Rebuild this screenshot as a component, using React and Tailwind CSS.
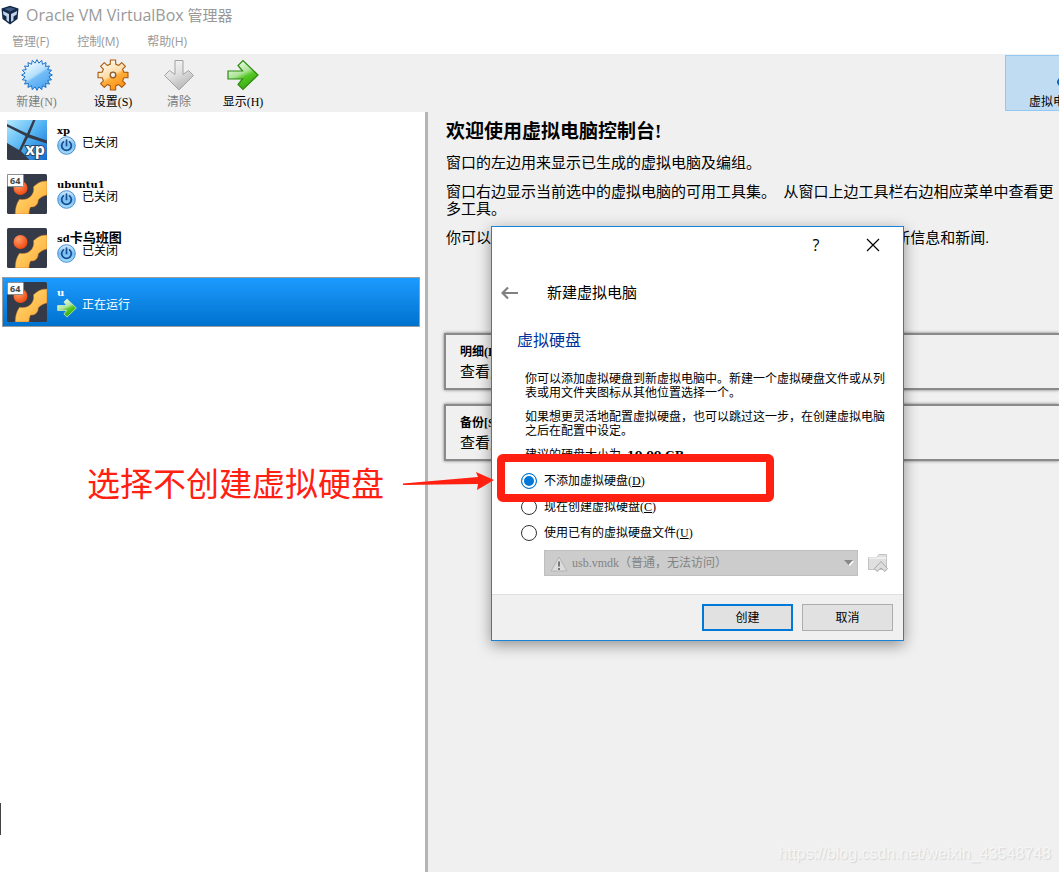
const cjk = "font-['Liberation_Serif','Noto_Sans_CJK_SC',sans-serif]";

function BoxLogo() {
  return (
    <svg className="h-5 w-5" viewBox="0 0 20 20" aria-hidden="true">
      <path d="M1.500 3.500 10 .8l8.500 2.700-1 10.500L10 19.500 2.500 14z" fill="#14294a" />
      <path d="M4.500 3.900 10 2.200l5.500 1.700L10 6.500z" fill="#3d5a82" />
      <path d="M3 6 9 9v8L6.500 15.300V11.500L3.300 9.500zM17 6l-6 3v8l2.500-1.700V11.500l3.200-2z" fill="#c3d3e6" />
    </svg>
  );
}

function NewIcon() {
  const points = Array.from({ length: 40 }, (_, i) => {
    const r = i % 2 ? 12 : 15.4;
    const a = (i * Math.PI) / 20 - Math.PI / 2;
    return `${(16 + r * Math.cos(a)).toFixed(2)},${(16 + r * Math.sin(a)).toFixed(2)}`;
  }).join(" ");
  return (
    <svg className="h-8 w-8" viewBox="0 0 32 32" aria-hidden="true">
      <defs>
        <linearGradient id="newFill" x1="0.15" y1="0" x2="0.8" y2="1">
          <stop offset="0.1" stopColor="#f2fbff" />
          <stop offset="0.48" stopColor="#b2defc" />
          <stop offset="0.55" stopColor="#74bdf6" />
          <stop offset="1" stopColor="#47a0ef" />
        </linearGradient>
      </defs>
      <polygon points={points} fill="url(#newFill)" stroke="#1c74cc" strokeWidth="1" />
    </svg>
  );
}

function GearIcon() {
  const teeth = [0, 45, 90, 135, 180, 225, 270, 315];
  const outline = teeth
    .flatMap((t) =>
      [
        [-14, 11.2],
        [-10, 15.2],
        [10, 15.2],
        [14, 11.2],
      ].map(([d, r]) => {
        const a = ((t + d) * Math.PI) / 180;
        return `${(16 + r * Math.sin(a)).toFixed(2)},${(16 - r * Math.cos(a)).toFixed(2)}`;
      }),
    )
    .join(" ");
  return (
    <svg className="h-8 w-8" viewBox="0 0 32 32" aria-hidden="true">
      <defs>
        <linearGradient id="gearFill" x1="0.2" y1="0" x2="0.75" y2="1">
          <stop offset="0.1" stopColor="#fff6e6" />
          <stop offset="0.48" stopColor="#ffdca8" />
          <stop offset="0.58" stopColor="#ffad3b" />
          <stop offset="1" stopColor="#ff8c0a" />
        </linearGradient>
      </defs>
      <polygon points={outline} fill="url(#gearFill)" stroke="#a85c10" strokeWidth="1.1" strokeLinejoin="round" />
      <circle cx="16" cy="16" r="2.800" fill="#efefef" stroke="#8c5a22" strokeWidth="1.300" />
    </svg>
  );
}

function DiscardIcon() {
  return (
    <svg className="h-8 w-8" viewBox="0 0 32 32" aria-hidden="true">
      <defs>
        <linearGradient id="discardFill" x1="0" y1="0" x2="0.5" y2="1">
          <stop offset="0" stopColor="#fbfbfb" />
          <stop offset="0.5" stopColor="#e2e2e2" />
          <stop offset="1" stopColor="#b9b9b9" />
        </linearGradient>
      </defs>
      <path d="M12 1.500h8v14l5.500-4 5 5L16 31 1.500 16.500l5-5 5.500 4z" fill="url(#discardFill)" stroke="#a2a2a2" />
    </svg>
  );
}

function ShowIcon({ small = false }) {
  return (
    <svg className={small ? "h-5 w-5" : "h-8 w-8"} viewBox="0 0 32 32" aria-hidden="true">
      <defs>
        <linearGradient id={small ? "showSmall" : "showFill"} x1="0.2" y1="0" x2="0.7" y2="1">
          <stop offset="0" stopColor="#f4ffef" />
          <stop offset="0.45" stopColor="#aee49a" />
          <stop offset="0.6" stopColor="#55c824" />
          <stop offset="1" stopColor="#32a40c" />
        </linearGradient>
      </defs>
      <path
        d="M1 12h14.500l-4.500-5.500 5-5L31 16 16 30.500l-5-5 4.500-5.500H1z"
        fill={small ? "url(#showSmall)" : "url(#showFill)"}
        stroke={small ? "#d4efc8" : "#2d8a12"}
        strokeWidth="1.200"
      />
    </svg>
  );
}

function PowerIcon() {
  return (
    <svg className="h-5 w-5" viewBox="0 0 20 20" aria-hidden="true">
      <defs>
        <linearGradient id="powerFill" x1="0" y1="0" x2="0" y2="1">
          <stop offset="0" stopColor="#d3ebfd" />
          <stop offset="0.5" stopColor="#78bdf3" />
          <stop offset="1" stopColor="#a8e0fb" />
        </linearGradient>
      </defs>
      <circle cx="9.500" cy="9.500" r="8.800" fill="url(#powerFill)" stroke="#4a8fd0" />
      <path d="M6.500 5.800a4.800 4.800 0 1 0 6 0M9.500 4v5.500" fill="none" stroke="#174f91" strokeWidth="1.700" strokeLinecap="round" />
    </svg>
  );
}

function XpIcon() {
  return (
    <svg className="h-10 w-10 shrink-0" viewBox="0 0 40 40" aria-hidden="true">
      <defs>
        <linearGradient id="xpFill" x1="0" y1="0" x2="1" y2="1">
          <stop offset="0" stopColor="#b5eaff" />
          <stop offset="0.5" stopColor="#51b2f3" />
          <stop offset="1" stopColor="#1268cf" />
        </linearGradient>
      </defs>
      <rect width="40" height="40" rx="1.500" fill="#343a47" />
      <path d="M0 0h26l-6 13.500L0 4zM28.500 0H40v20.500l-17.500-6zM0 6.500l18.500 9.500L12 30 0 23zM21 17.500 40 23.500V40H22.500L14 31z" fill="url(#xpFill)" />
      <text x="18.500" y="35" fontFamily="Open Sans, sans-serif" fontSize="16" fontWeight="700" fill="#fff" stroke="#26466e" strokeWidth="2" paintOrder="stroke">xp</text>
    </svg>
  );
}

function UbuntuIcon({ badge }) {
  return (
    <svg className="h-10 w-10 shrink-0" viewBox="0 0 40 40" aria-hidden="true">
      <defs>
        <linearGradient id="ubuArc" x1="0" y1="0" x2="1" y2="1">
          <stop offset="0" stopColor="#ffe27e" />
          <stop offset="1" stopColor="#ffa62f" />
        </linearGradient>
        <radialGradient id="ubuDot" cx="0.35" cy="0.3" r="0.8">
          <stop offset="0" stopColor="#ff9e68" />
          <stop offset="1" stopColor="#ee4107" />
        </radialGradient>
      </defs>
      <rect width="40" height="40" rx="1.500" fill="#343a47" />
      <circle cx="13.500" cy="14" r="7" fill="url(#ubuDot)" />
      <path
        d="M40 7c-4 0-6.500.8-9 2.200-1 .8-3 1.800-4.500 3.600.6 4-.3 6.700-2.500 9.200-3 3.200-6.500 4-11.500 3.300C9.500 29.500 8.300 34 8.200 40H22c.1-3 .6-5 1.600-7 1.700.2 3.800 0 5.400-1.500 1.600-1.600 2.300-3.500 2.200-5.500 2.300-2.600 5-4.200 8.800-5z"
        fill="url(#ubuArc)"
        stroke="#c7702a"
        strokeWidth="0.500"
      />
      {badge && (
        <>
          <rect x="0.500" y="0.500" width="16" height="12" rx="1" fill="#fff" stroke="#8a8d94" />
          <text x="3" y="10" fontFamily="Open Sans, sans-serif" fontSize="9" fontWeight="700" fill="#454545">64</text>
        </>
      )}
    </svg>
  );
}

function ToolButton({ icon, label, disabled, className }) {
  return (
    <button type="button" disabled={disabled} className={`flex flex-col items-center gap-[3px] pt-[5px] text-xs ${disabled ? "text-[#7d7d7d]" : "text-black"} ${className}`}>
      {icon}
      <span className="whitespace-nowrap leading-4">{label}</span>
    </button>
  );
}

function Machine({ icon, name, running }) {
  return (
    <li className={`mx-0.5 flex h-[50px] items-center gap-2.5 border px-1 ${running ? "border-[#9c9c9c] bg-linear-to-b from-[#1c9bff] to-[#0072ce] text-white" : "border-transparent"}`}>
      {icon}
      <div className="flex flex-col">
        <span className="h-3 whitespace-nowrap font-['DejaVu_Serif','Noto_Sans_CJK_SC',serif] text-[13px] font-bold leading-3">
          {name.latin && <span className="text-[10px]">{name.latin}</span>}
          {name.han}
        </span>
        <span className="flex items-start gap-[5px] text-xs leading-[14px]">
          {running ? <ShowIcon small /> : <PowerIcon />}
          {running ? "正在运行" : "已关闭"}
        </span>
      </div>
    </li>
  );
}

function ToolCard({ title, text }) {
  return (
    <section className="flex h-[57px] flex-col justify-center border-2 border-r-0 border-[#8a8a8a] pl-3.5 shadow-[0_0_3px_#777]">
      <h2 className="text-xs font-bold leading-5">{title}</h2>
      <p className="text-[15px] leading-5">{text}</p>
    </section>
  );
}

function Choice({ children, ...props }) {
  return (
    <label className="flex h-[26px] items-center gap-[7px] text-xs">
      <input
        type="radio"
        name="disk"
        className="m-0 h-4 w-4 appearance-none rounded-full border border-[#333] bg-white checked:border-[#0078d7] checked:bg-[#0078d7] checked:shadow-[inset_0_0_0_2px_#fff]"
        {...props}
      />
      <span>{children}</span>
    </label>
  );
}

function Dialog() {
  return (
    <div role="dialog" aria-label="新建虚拟电脑" className="absolute left-[491px] top-[226px] flex w-[413px] flex-col border border-[#1883d7] bg-white shadow-[0_4px_14px_rgba(0,0,0,0.4)]">
      <div className="flex h-9 items-center justify-end gap-[37px] pr-5 font-['Open_Sans',sans-serif]">
        <button type="button" className="w-5 text-base">?</button>
        <button type="button" aria-label="关闭" className="flex w-5 justify-center">
          <svg className="h-3.5 w-3.5" viewBox="0 0 14 14" aria-hidden="true">
            <path d="M1 1l12 12M13 1 1 13" stroke="#000" strokeWidth="1.200" />
          </svg>
        </button>
      </div>
      <div className="flex h-[60px] items-center gap-7 pl-[9px]">
        <button type="button" aria-label="返回">
          <svg className="h-4 w-[18px]" viewBox="0 0 18 16" aria-hidden="true">
            <path d="M17 8H2M7 2.500 1.500 8 7 13.500" fill="none" stroke="#808080" strokeWidth="2.200" />
          </svg>
        </button>
        <span className="text-[15px]">新建虚拟电脑</span>
      </div>
      <div className="flex flex-col pl-[25px] pr-[15px] pt-0.5">
        <h2 className="text-base leading-8 text-[#003399]">虚拟硬盘</h2>
        <div className="mt-[15px] flex flex-col gap-2.5 pl-2 text-xs leading-[14px]">
          <p>你可以添加虚拟硬盘到新虚拟电脑中。新建一个虚拟硬盘文件或从列表或用文件夹图标从其他位置选择一个。</p>
          <p>如果想更灵活地配置虚拟硬盘，也可以跳过这一步，在创建虚拟电脑之后在配置中设定。</p>
          <p className="h-[14px]">建议的硬盘大小为&nbsp; <b className="font-['DejaVu_Serif',serif] text-[11px]">10.00 GB</b>。</p>
        </div>
        <fieldset className="mt-1.5 flex flex-col pl-1">
          <Choice defaultChecked>不添加虚拟硬盘(<u>D</u>)</Choice>
          <Choice>现在创建虚拟硬盘(<u>C</u>)</Choice>
          <Choice>使用已有的虚拟硬盘文件(<u>U</u>)</Choice>
        </fieldset>
        <div className="mt-1 flex items-center gap-2.5 pl-[27px]">
          <div className="relative grow">
            <select disabled aria-label="虚拟硬盘文件" className="block h-[26px] w-full appearance-none border border-[#bfbfbf] bg-[#cccccc] pl-[27px] text-xs text-[#838383] opacity-100">
              <option>usb.vmdk（普通，无法访问）</option>
            </select>
            <svg className="pointer-events-none absolute left-1.5 top-1.5 h-4 w-[18px]" viewBox="0 0 18 16" aria-hidden="true">
              <path d="M9 1 17 15H1z" fill="#dcdcdc" stroke="#b4b4b4" />
              <path d="M9 5.500v5M9 12v2" stroke="#777" strokeWidth="2" />
            </svg>
            <svg className="pointer-events-none absolute right-1 top-2.5 h-1.5 w-2.5" viewBox="0 0 10 6" aria-hidden="true">
              <path d="M1 1h9L6 6z" fill="#fff" />
              <path d="M0 0h9L4.500 5z" fill="#888" />
            </svg>
          </div>
          <button type="button" disabled aria-label="选择虚拟硬盘文件">
            <svg className="h-5 w-5" viewBox="0 0 20 20" aria-hidden="true">
              <path d="M.5 16.500V4.500H9l2-3h7.500v15z" fill="#dfdfdf" stroke="#c2c2c2" />
              <path d="M1 5h17.500" stroke="#fff" />
              <path d="m13 8.500 6.500 7-2.500 3-4-3.500-4 3.500-2.500-3z" fill="#dcdcdc" stroke="#a9a9a9" />
            </svg>
          </button>
        </div>
      </div>
      <div className="mt-[18px] flex gap-[9px] border-t border-[#dfdfdf] bg-[#f0f0f0] px-2.5 py-[9px] text-xs">
        <button type="button" className="ml-auto h-[27px] w-[91px] border-2 border-[#0078d7] bg-[#e1e1e1]">创建</button>
        <button type="button" className="h-[27px] w-[91px] border border-[#adadad] bg-[#e1e1e1]">取消</button>
      </div>
    </div>
  );
}

function Annotations() {
  return (
    <>
      <p className="absolute left-[87px] top-[460px] font-['Noto_Sans_CJK_SC',sans-serif] text-[33px] leading-[44px] text-[#ff2012]">选择不创建虚拟硬盘</p>
      <svg className="pointer-events-none absolute left-[402px] top-[470px] h-5 w-[92px]" viewBox="0 0 92 20" aria-hidden="true">
        <path d="M1 13.500 76 7 74 2l18 8-17 10 1-6L1 15z" fill="#ff2012" />
      </svg>
      <div className="pointer-events-none absolute left-[497px] top-[454px] h-[48px] w-[277px] rounded-md border-8 border-[#ff2012]" />
    </>
  );
}

export default function App() {
  return (
    <div className={`relative flex min-h-screen flex-col overflow-hidden bg-white text-black ${cjk}`}>
      <header className="font-['Open_Sans','Noto_Sans_CJK_SC',sans-serif] text-[#999]">
        <div className="flex h-[30px] items-center gap-1.5">
          <BoxLogo />
          <h1 className="text-[15px] leading-5"><span className="text-base leading-5">Oracle VM VirtualBox</span> 管理器</h1>
        </div>
        <nav className="flex h-6 items-center gap-7 pl-3 text-xs">
          <button type="button">管理(F)</button>
          <button type="button">控制(M)</button>
          <button type="button">帮助(H)</button>
        </nav>
      </header>
      <div className="flex h-[58px] bg-[#f0f0f0]">
        <ToolButton icon={<NewIcon />} label="新建(N)" disabled className="w-[73px]" />
        <ToolButton icon={<GearIcon />} label="设置(S)" className="w-[80px]" />
        <ToolButton icon={<DiscardIcon />} label="清除" disabled className="w-[52px]" />
        <ToolButton icon={<ShowIcon />} label="显示(H)" className="w-[76px]" />
        <button type="button" className="ml-auto mt-px flex h-14 w-[54px] flex-col justify-end overflow-hidden border border-r-0 border-[#90c8f6] bg-[#c0dcf3] pl-[23px] text-xs leading-4">
          <svg className="mb-2 ml-auto h-2 w-0.5" viewBox="0 0 2 8" aria-hidden="true">
            <path d="M2 0v8L0 5V3z" fill="#1763c0" />
          </svg>
          <span className="whitespace-nowrap">虚拟电脑</span>
        </button>
      </div>
      <main className="flex grow">
        <ul className="flex w-[422px] shrink-0 flex-col gap-1 pt-[3px]">
          <Machine icon={<XpIcon />} name={{ latin: "xp" }} />
          <Machine icon={<UbuntuIcon badge />} name={{ latin: "ubuntu1" }} />
          <Machine icon={<UbuntuIcon />} name={{ latin: "sd", han: "卡乌班图" }} />
          <Machine icon={<UbuntuIcon badge />} name={{ latin: "u" }} running />
        </ul>
        <div className="ml-[3px] w-[3px] shrink-0 bg-[#b4b4b4]" />
        <div className="min-w-0 grow bg-[#f0f0f0] pl-4">
          <div className="flex flex-col gap-3 pl-0.5 pt-2 text-[15px] leading-[17px]">
            <h2 className="text-[19px] font-bold leading-[23px]">欢迎使用虚拟电脑控制台!</h2>
            <p>窗口的左边用来显示已生成的虚拟电脑及编组。</p>
            <p>窗口右边显示当前选中的虚拟电脑的可用工具集。&nbsp; 从窗口上边工具栏右边相应菜单中查看更多工具。</p>
            <p className="flex w-[543px] justify-between whitespace-nowrap">
              <span>你可以按 F1 键来查看帮助，</span>
              <span>或访问 www.virtualbox.org</span>
              <span>查看最新信息和新闻.</span>
            </p>
          </div>
          <div className="flex flex-col gap-[14px] pt-[86px]">
            <ToolCard title="明细(D)" text="查看虚拟电脑的明细" />
            <ToolCard title="备份[S]" text="查看虚拟电脑的备份" />
          </div>
        </div>
      </main>
      <Dialog />
      <Annotations />
      <div className="absolute left-0 top-[803px] h-8 w-px bg-[#444]" />
      <p className="absolute bottom-1.5 right-2 font-['Liberation_Sans',sans-serif] text-base leading-6 text-[#f6f6f6] [text-shadow:1px_1px_1px_#d4d4d4]">https://blog.csdn.net/weixin_43548748</p>
    </div>
  );
}
